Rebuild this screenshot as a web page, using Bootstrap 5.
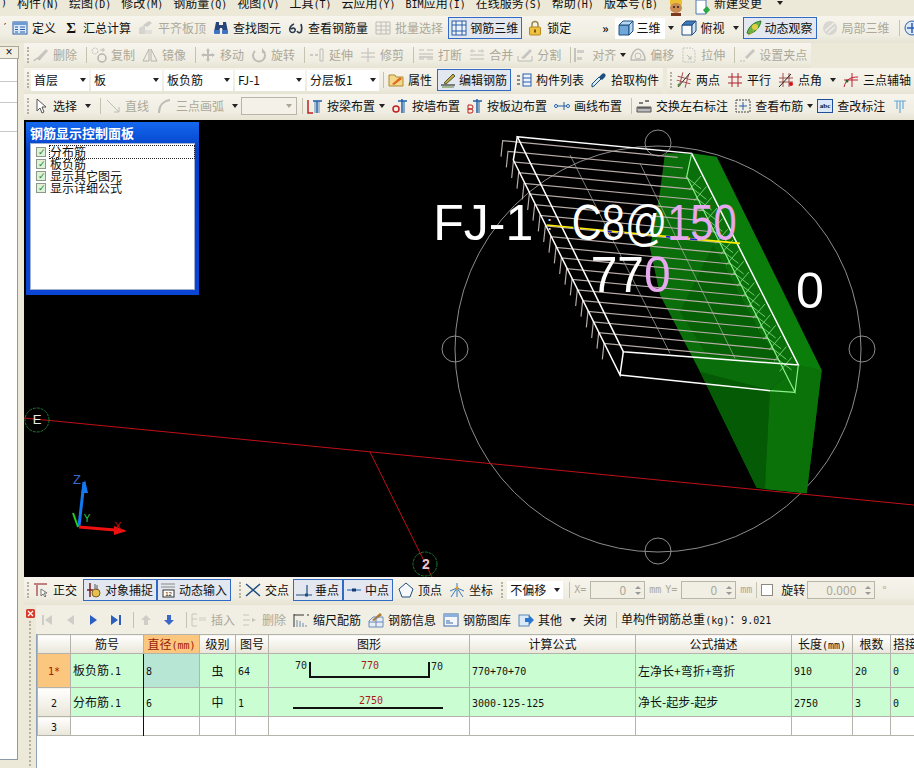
<!DOCTYPE html>
<html lang="zh-CN">
<head>
  <meta charset="UTF-8">
  <meta name="viewport" content="width=device-width, initial-scale=1">
  <title>钢筋三维</title>
  <link href="https://cdn.jsdelivr.net/npm/bootstrap@5.3.3/dist/css/bootstrap.min.css" rel="stylesheet">
  <style>
    html, body { height: 768px; overflow: hidden; }
    body { width: 914px; background: #ece9d8; color: #111; font: 12px/1 "Noto Sans CJK SC", "Liberation Sans", sans-serif; }
    .lat { font-family: "DejaVu Sans Mono", "Liberation Mono", monospace; font-size: 10px; }
    .ic { width: 16px; height: 16px; flex: none; }
    .sigma { font: 700 15px/16px "Liberation Serif", serif; text-align: center; }

    .menu-row { height: 16px; line-height: 5px; gap: 10px; padding-left: 1px; overflow: hidden; white-space: nowrap; }
    .menu-doc { gap: 1px; }
    .menu-caret { margin: 0 0 10px 5px; }
    .tb-row { white-space: nowrap; overflow: hidden; background: #ece9d8; }
    .tb-seg { height: 100%; gap: 7px; background: linear-gradient(#f6f4ec, #f0eee2 70%, #e6e3d3); align-items: center; padding-left: 2px; padding-bottom: 2px; }
    .row-a { height: 27px; }
    .row-a .tb-seg { padding-bottom: 3px; }
    .row-b { height: 25px; }
    .row-c { height: 26px; }
    .tb-it { display: inline-flex; align-items: center; gap: 4px; flex: none; }
    .off { color: #aca899; }
    .off .ic { filter: grayscale(1) opacity(.5); }
    .tb-on { display: inline-flex; align-items: center; gap: 3px; flex: none; height: 22px; margin: 0 -2px; padding: 0 3px 0 2px; border: 1px solid #316ac5; background: #e3e7ef; }
    .grip { width: 2px; height: 16px; flex: none; margin: 0 -3px 0 1px; border-left: 2px dotted #b5b19e; }
    .tb-sep { width: 1px; height: 16px; flex: none; margin: 0 -3px 0 2px; background: #c5c2b0; }
    .arr { width: 0; height: 0; flex: none; border: 3px solid transparent; border-top: 4px solid #222; border-bottom: 0; }
    .tick { margin-right: -3px; }
    .tight { margin-left: -3px; }
    .tighter { margin-left: -5px; }
    .chev-gap { margin-left: 24px; }
    .combo { display: flex; align-items: center; justify-content: space-between; height: 21px; flex: none; padding: 0 3px; background: #fff; }
    .combo-line { gap: 2px; margin: 0 -5px 0 -2px; }
    .combo-w1 { width: 58px; } .combo-w2 { width: 71px; } .combo-w3 { width: 69px; } .combo-w4 { width: 70px; } .combo-w5 { width: 72px; }
    .combo-w6 { width: 56px; height: 18px; margin-right: -3px; }
    .view-box { width: 50px; justify-content: flex-start; gap: 3px; margin-left: -1px; }
    .view-arr { margin-left: -4px; }
    .combo-off { width: 56px; height: 18px; flex: none; display: flex; align-items: center; justify-content: flex-end; padding-right: 4px; margin: 0 -4px 0 -4px; background: #f3f1e8; border: 1px solid #b8b6a8; }
    .combo-off .arr { border-top-color: #aca899; }
    .spin { height: 18px; flex: none; display: flex; align-items: center; justify-content: flex-end; gap: 9px; padding-right: 3px; border: 1px solid #b8b6a8; color: #aca899; background: #f1efe4; }
    .spin-w1 { width: 55px; } .spin-w2 { width: 68px; }
    .spin-btn { display: flex; flex-direction: column; gap: 3px; }
    .spin-btn i { display: block; width: 0; border: 3px solid transparent; border-bottom: 3px solid #999; border-top: 0; }
    .spin-btn i + i { border-top: 3px solid #999; border-bottom: 0; }
    .mm { color: #aca899; }
    .num-set { gap: 4px; align-items: center; }
    .chk-off { width: 12px; height: 12px; flex: none; margin-right: 1px; background: #fff; border: 1px solid #8a8a80; }
    .pair-a { margin-left: -1px; }
    .pair-b { margin: 0 -2px 0 -3px; }
    .pair-a .tb-on, .pair-b .tb-on { margin: 0; }

    .side-col { width: 24px; flex: none; height: 725px; }
    .side-list { width: 18px; height: 701px; background: #fff; border-right: 1px solid #8a9aa8; border-bottom: 1px solid #8a9aa8; }
    .side-head { height: 13px; margin-top: 3px; width: 19px; background: #f1efe4; border: 1px solid #aca899; border-left: 0; text-align: center; font: 12px/11px "Liberation Sans", sans-serif; }
    .side-rw { border-bottom: 1px solid #c8c8c8; }
    .side-h1 { height: 23px; }
    .side-h2 { height: 21px; }
    .side-h3 { height: 29px; }
    .main-col { width: 890px; flex: none; }

    .view-wrap { height: 457px; background: #000; overflow: hidden; }
    .view-wrap svg { display: block; }
    .rebar-panel { position: absolute; left: 2px; top: 2px; width: 173px; height: 173px; background: linear-gradient(#1468ee, #0240c8 16%, #0a45d4); padding: 0 4px 5px; }
    .rebar-title { height: 21px; color: #fff; font-weight: 700; line-height: 21px; font-size: 13px; }
    .rebar-body { height: 147px; background: #fff; border: 1px solid #9fb0d0; padding: 2px 0 0 5px; }
    .rebar-it { height: 12px; display: flex; align-items: center; gap: 4px; color: #111; }
    .rebar-it span { display: block; line-height: 12px; height: 12px; width: 145px; }
    .rebar-it:first-child span { outline: 1px dotted #222; }
    .chk { width: 10px; height: 10px; flex: none; position: relative; background: #dff0d8; border: 1px solid #8a9a88; }
    .chk::after { content: "✓"; position: absolute; left: 1px; top: -1px; font: 700 9px/10px "DejaVu Sans", sans-serif; color: #128a24; }

    .snap-bar { height: 28px; }
    .grid-wrap { height: 163px; background: #ece9d8; overflow: hidden; }
    .grid-rail { width: 12px; flex: none; }
    .grid-close { margin: 4px 0 0 2px; display: block; }
    .grid-dots { width: 0; height: 145px; margin: 3px 0 0 5px; border-left: 2px dotted #b5b19e; }
    .grid-tools { height: 29px; gap: 7px; align-items: center; background: #f1efe4; padding-left: 3px; white-space: nowrap; overflow: hidden; }
    .grid-pane { background: #fff; height: 134px; overflow: hidden; border-left: 1px solid #8ea2b8; }
    .table.grid-tb { width: 893px; table-layout: fixed; border-color: #b4b4ac; }
    .table.grid-tb > * > * > * { padding: 0 2px; vertical-align: middle; font-weight: 400; color: #111; white-space: nowrap; overflow: hidden; }
    .table.grid-tb th { height: 19px; text-align: center; border-top-color: #8ea2b8; background-image: linear-gradient(#fff, #e9e6d8); }
    .table.grid-tb th.th-hot { background-image: none; --bs-table-bg: #fbc67e; color: #9a1a08; }
    .table.grid-tb td.td-green { --bs-table-bg: #cbfdd3; }
    .table.grid-tb td.td-cur { --bs-table-bg: #b8e6d4; }
    .table.grid-tb td.td-head { text-align: center; background-image: linear-gradient(#fff, #e9e6d8); }
    .table.grid-tb td.td-hot { background-image: none; --bs-table-bg: #fbc67e; color: #9a1a08; }
    .table.grid-tb .bar-r { border-right: 1px solid #111; }
    .rw-1 > * { height: 34px; }
    .rw-2 > * { height: 29px; }
    .rw-3 > * { height: 19px; }
    .c-h { width: 33px; } .c-a { width: 73px; } .c-b { width: 56px; } .c-c { width: 36px; }
    .c-d { width: 33px; } .c-e { width: 201px; } .c-f { width: 166px; } .c-g { width: 156px; }
    .c-i { width: 61px; } .c-j { width: 38px; } .c-k { width: 40px; }
    .shape-svg { display: block; margin: 0 -2px; }
    .shape-txt { font: 10px "DejaVu Sans Mono", monospace; }
  </style>
</head>
<body>

<svg width="0" height="0" class="position-absolute">
  <defs>
    <symbol id="i-def" viewBox="0 0 16 16"><rect x="1" y="2" width="14" height="12" fill="#dbe8f8" stroke="#2a5fa8"/><rect x="1" y="2" width="14" height="3" fill="#6f9bd4"/><path d="M3 7h3M3 9.500h3M3 12h3M8 7h5M8 9.500h5M8 12h5" stroke="#2a5fa8"/></symbol>
    <symbol id="i-flat" viewBox="0 0 16 16"><path d="M1 14V8l6-3v9z" fill="#b8b8b0"/><path d="M7 14h7V10H7z" fill="#d0d0c8"/><path d="M5 5l6-4 3 2-5 4z" fill="#a8a8a0"/></symbol>
    <symbol id="i-find" viewBox="0 0 16 16"><path d="M3 2h3v3h4V2h3l2 10h-5l-1-4H7l-1 4H1z" fill="#27457a"/><rect x="1" y="10" width="6" height="4" rx="1" fill="#3d72c4"/><rect x="9" y="10" width="6" height="4" rx="1" fill="#3d72c4"/></symbol>
    <symbol id="i-view" viewBox="0 0 16 16"><path d="M6 4C3 5 1 8 2 11c1 2 4 2 5 0s-1-4-4-2M13 4c1 3 1 6 0 8-1 1-3 1-4-1" fill="none" stroke="#2a3a50" stroke-width="1.600"/></symbol>
    <symbol id="i-batch" viewBox="0 0 16 16"><path d="M1 2h14v12H1zM1 6h14M1 10h14M6 2v12M11 2v12" fill="none" stroke="#888"/></symbol>
    <symbol id="i-bar3d" viewBox="0 0 16 16"><rect x="1" y="1" width="14" height="14" fill="#eef3fb" stroke="#2a5fa8"/><path d="M5 1v14M11 1v14M1 5h14M1 11h14" stroke="#2a5fa8"/></symbol>
    <symbol id="i-lock" viewBox="0 0 16 16"><path d="M5 7V4.500a3 3 0 0 1 6 0V7" fill="none" stroke="#9a8a50" stroke-width="1.500"/><rect x="2.500" y="7" width="11" height="8" rx="1" fill="#f0c040" stroke="#b48a20"/><rect x="7" y="9.500" width="2" height="3" fill="#7a5a10"/></symbol>
    <symbol id="i-cube" viewBox="0 0 16 16"><path d="M1 5h10v10H1z" fill="#6fa8d8" stroke="#1f4e80"/><path d="M1 5l4-4h10l-4 4zM11 5l4-4v10l-4 4z" fill="#b8d8f0" stroke="#1f4e80"/></symbol>
    <symbol id="i-cube2" viewBox="0 0 16 16"><path d="M1 5h10v10H1z" fill="#f6f8fc" stroke="#1f4e80"/><path d="M1 5l4-4h10l-4 4z" fill="#3f78b8" stroke="#1f4e80"/><path d="M11 5l4-4v10l-4 4z" fill="#cfe2f4" stroke="#1f4e80"/></symbol>
    <symbol id="i-orbit" viewBox="0 0 16 16"><path d="M1 13C3 6 8 2 15 1c-1 6-5 11-12 13z" fill="#6ab04a" stroke="#2a7a2a"/><circle cx="9" cy="7" r="3" fill="#e0d040"/><path d="M2 15c3-1 5-3 6-5" stroke="#c8b020" fill="none"/></symbol>
    <symbol id="i-ball" viewBox="0 0 16 16"><circle cx="8" cy="8" r="7" fill="#bbb"/><path d="M3 11l9-8M6 13l7-6" stroke="#eee" stroke-width="1.500"/></symbol>
    <symbol id="i-nav" viewBox="0 0 16 16"><circle cx="8" cy="8" r="7" fill="#dbe8f8" stroke="#2a5fa8"/><path d="M8 3v10M3 8h10" stroke="#2a5fa8" stroke-width="1.500"/></symbol>

    <symbol id="i-del" viewBox="0 0 16 16"><path d="M4 11L13 2l2 2-8 9z" fill="#999"/><path d="M1 14c2-3 4-3 6-1" stroke="#888" fill="none" stroke-width="1.500"/></symbol>
    <symbol id="i-copy" viewBox="0 0 16 16"><circle cx="4" cy="4" r="3" fill="none" stroke="#888" stroke-dasharray="2 1"/><circle cx="11" cy="11" r="4" fill="none" stroke="#777" stroke-width="1.500"/><path d="M9 3h5M12 1v4" stroke="#888"/></symbol>
    <symbol id="i-mirror" viewBox="0 0 16 16"><path d="M7 2v12H1zM9 2v12h6z" fill="none" stroke="#777"/></symbol>
    <symbol id="i-move" viewBox="0 0 16 16"><path d="M8 1l2 3H9v3h3V6l3 2-3 2V9H9v3h1l-2 3-2-3h1V9H4v1L1 8l3-2v1h3V4H6z" fill="#888"/></symbol>
    <symbol id="i-rot" viewBox="0 0 16 16"><path d="M4 4a6 6 0 1 0 8 0" fill="none" stroke="#888" stroke-width="2"/><path d="M11 1v5h4" fill="#888"/></symbol>
    <symbol id="i-ext" viewBox="0 0 16 16"><path d="M1 8h3M6 8h3" stroke="#888" stroke-width="1.500"/><path d="M11 2v12M14 2v12M11 2h3M11 14h3" stroke="#888" fill="none"/></symbol>
    <symbol id="i-trim" viewBox="0 0 16 16"><path d="M1 6h14M1 10h14M8 1v14" stroke="#888" fill="none"/></symbol>
    <symbol id="i-brk" viewBox="0 0 16 16"><path d="M1 3h5M9 3h6M1 7h14M1 12h5M9 12h6" stroke="#888"/><rect x="1" y="9" width="14" height="2" fill="#aaa"/></symbol>
    <symbol id="i-merge" viewBox="0 0 16 16"><path d="M1 4h5M9 4h6M1 8h14M1 12h14" stroke="#888"/><path d="M3 2v4M13 2v4" stroke="#aaa"/></symbol>
    <symbol id="i-split" viewBox="0 0 16 16"><path d="M1 14h14M1 14V9M15 14V9" stroke="#888" fill="none"/><path d="M4 11L13 2l2 2-8 8z" fill="#999"/></symbol>
    <symbol id="i-align" viewBox="0 0 12 16"><path d="M1 1v14" stroke="#777" stroke-width="1.500"/><rect x="3" y="3" width="7" height="3" fill="#aaa"/><rect x="3" y="10" width="5" height="3" fill="#aaa"/></symbol>
    <symbol id="i-off" viewBox="0 0 16 16"><path d="M1 13c0-6 4-11 7-11s7 5 7 11z" fill="none" stroke="#888" stroke-width="1.500"/><circle cx="8" cy="9" r="3" fill="none" stroke="#888"/></symbol>
    <symbol id="i-str" viewBox="0 0 16 16"><path d="M2 1h9l3 3v11H2z" fill="none" stroke="#999" stroke-dasharray="2 1"/><path d="M6 8l4 4M10 9v3H7" stroke="#888" fill="none"/></symbol>
    <symbol id="i-clip" viewBox="0 0 16 16"><path d="M6 10l8-8 2 2-8 8z" fill="#999"/><path d="M1 14h6" stroke="#888" stroke-dasharray="2 1"/></symbol>

    <symbol id="i-attr" viewBox="0 0 16 16"><path d="M1 3h6l1 2h7v9H1z" fill="#f4d88a" stroke="#b08a30"/><path d="M4 12l8-7 2 2-8 6z" fill="#e06a20"/></symbol>
    <symbol id="i-edit" viewBox="0 0 16 16"><path d="M1 13h14" stroke="#111"/><path d="M4 11L13 2l2 2-9 8z" fill="#c8a840" stroke="#4a5a30"/><path d="M2 15h12" stroke="#5a8a3a"/></symbol>
    <symbol id="i-list" viewBox="0 0 16 16"><path d="M1 3h3v2H1zM1 7h3v2H1zM1 11h3v2H1z" fill="#888"/><rect x="7" y="2" width="8" height="12" fill="#eef3fb" stroke="#2a5fa8"/><path d="M7 6h8M7 10h8" stroke="#2a5fa8"/></symbol>
    <symbol id="i-pick" viewBox="0 0 16 16"><path d="M1 15l2-1 7-7-2-2-7 7z" fill="#d8ecf8" stroke="#1f4e80"/><path d="M8 5l3-3a2 2 0 0 1 3 3l-3 3z" fill="#1f4e80"/></symbol>
    <symbol id="i-two" viewBox="0 0 16 16"><path d="M5 1v14M11 1v14M1 6h14M1 10h14" stroke="#a05050" fill="none" transform="rotate(15 8 8)"/><path d="M2 15L14 1" stroke="#333"/><circle cx="3" cy="13" r="1.500" fill="#5a8a3a"/></symbol>
    <symbol id="i-par" viewBox="0 0 16 16"><path d="M5 1v14M11 1v14M1 5h14M1 11h14" stroke="#b02030" fill="none"/></symbol>
    <symbol id="i-ang" viewBox="0 0 16 16"><path d="M5 1v14M11 1v14M1 6h14M1 10h14" stroke="#a05050"/><path d="M1 15L13 2" stroke="#222"/><circle cx="13" cy="12" r="2" fill="#d81020"/></symbol>
    <symbol id="i-tri" viewBox="0 0 16 16"><path d="M1 15C3 7 8 5 15 5M1 8h14M9 1v14" stroke="#c02030" fill="none"/><circle cx="4" cy="9" r="1.500" fill="#2a5a2a"/></symbol>

    <symbol id="i-cur" viewBox="0 0 16 16"><path d="M4 1v12l3-3 2 5 2-1-2-5h4z" fill="#fff" stroke="#555"/></symbol>
    <symbol id="i-line" viewBox="0 0 16 16"><path d="M2 2l12 12M14 9v5H9" stroke="#888" fill="none"/></symbol>
    <symbol id="i-arc" viewBox="0 0 16 16"><path d="M3 15C3 8 7 3 14 2" stroke="#888" fill="none" stroke-width="2"/></symbol>
    <symbol id="i-beam" viewBox="0 0 16 16"><path d="M1 2v13h5" stroke="#c02020" fill="none" stroke-width="1.500"/><path d="M6 3h9M10 3v12" stroke="#1f5fa8" fill="none" stroke-width="1.500"/><path d="M8 3v12M12 3v12" stroke="#1f5fa8" fill="none" stroke-width=".7"/></symbol>
    <symbol id="i-wall" viewBox="0 0 16 16"><circle cx="4" cy="11" r="3" fill="none" stroke="#c02020" stroke-width="1.500"/><path d="M6 3h9M10 1v14" stroke="#1f5fa8" fill="none" stroke-width="1.500"/><path d="M12 3v12" stroke="#1f5fa8"/></symbol>
    <symbol id="i-slab" viewBox="0 0 16 16"><path d="M1 7h3a2 2 0 0 1 0 4H1zM1 11h3a2 2 0 0 1 0 4H1z" fill="none" stroke="#c02020"/><path d="M6 3h9M10 1v14" stroke="#1f5fa8" fill="none" stroke-width="1.500"/><path d="M12 3v12" stroke="#1f5fa8"/></symbol>
    <symbol id="i-draw" viewBox="0 0 16 16"><path d="M1 8h14M10 4v8" stroke="#1f5fa8"/><circle cx="2" cy="8" r="1.500" fill="#fff" stroke="#1f5fa8"/><circle cx="14" cy="8" r="1.500" fill="#fff" stroke="#1f5fa8"/></symbol>
    <symbol id="i-swap" viewBox="0 0 16 16"><path d="M1 9h14v5H1z" fill="#bbb" stroke="#555"/><path d="M3 9v2M5 9v2M7 9v2M9 9v2M11 9v2M13 9v2" stroke="#333"/><path d="M3 5h4M9 3h4" stroke="#555" stroke-width="1.500"/></symbol>
    <symbol id="i-look" viewBox="0 0 16 16"><rect x="1" y="2" width="14" height="12" fill="none" stroke="#444" stroke-dasharray="2 1"/><path d="M8 4v8M4 8h8" stroke="#2a5fa8"/></symbol>
    <symbol id="i-t" viewBox="0 0 16 16"><path d="M2 3h12M8 3v12M5 3v8M11 3v8" stroke="#6aa8d8" fill="none" stroke-width="1.200"/></symbol>

    <symbol id="i-orth" viewBox="0 0 16 16"><path d="M1 2h13M4 2v12" stroke="#c08080" stroke-width="2" fill="none"/><path d="M8 7v7l2-2 2 3 1-1-2-3h3z" fill="#fff" stroke="#777"/></symbol>
    <symbol id="i-snap" viewBox="0 0 16 16"><path d="M4 1v14M1 8h6" stroke="#7a2020" stroke-width="1.500"/><circle cx="10" cy="11" r="4" fill="#e8c050" stroke="#7a6020"/><path d="M9 2v5M11 3v5" stroke="#555"/></symbol>
    <symbol id="i-dyn" viewBox="0 0 16 16"><path d="M1 2h14M1 5h14" stroke="#888"/><rect x="3" y="8" width="11" height="7" fill="#fff" stroke="#333"/><text x="8.500" y="14" text-anchor="middle" font-size="6" font-family="Liberation Sans" fill="#111">12</text></symbol>
    <symbol id="i-cross" viewBox="0 0 16 16"><path d="M1 2l14 12M15 2L1 14" stroke="#1f4e80" stroke-width="1.500"/></symbol>
    <symbol id="i-perp" viewBox="0 0 16 16"><path d="M0 13h16M11 3v10" stroke="#1f4e80" stroke-width="1.200"/><rect x="9" y="11.500" width="3" height="3" fill="#1f4e80"/></symbol>
    <symbol id="i-mid" viewBox="0 0 16 16"><path d="M1 8h14" stroke="#5a8ac8" stroke-width="1.500"/><rect x="6" y="6.500" width="4" height="3" fill="#123a70"/></symbol>
    <symbol id="i-vert" viewBox="0 0 16 16"><path d="M8 1l7 6-3 8H4L1 7z" fill="#f6f8fc" stroke="#1f4e80"/></symbol>
    <symbol id="i-coord" viewBox="0 0 16 16"><path d="M8 1v14M1 9l7-3 7 3M2 15l6-9 6 9" stroke="#3a78b8" fill="none"/><circle cx="8" cy="6" r="1.500" fill="#e0a020"/></symbol>

    <symbol id="i-first" viewBox="0 0 16 16"><path d="M3 3h2v10H3zM13 3v10L6 8z" fill="#aaa"/></symbol>
    <symbol id="i-prev" viewBox="0 0 16 16"><path d="M12 3v10L5 8z" fill="#aaa"/></symbol>
    <symbol id="i-next" viewBox="0 0 16 16"><path d="M5 3v10l7-5z" fill="#2a5fc0"/></symbol>
    <symbol id="i-last" viewBox="0 0 16 16"><path d="M3 3v10l7-5zM11 3h2v10h-2z" fill="#2a5fc0"/></symbol>
    <symbol id="i-up" viewBox="0 0 16 16"><path d="M8 3l5 5h-3v5H6V8H3z" fill="#aaa"/></symbol>
    <symbol id="i-down" viewBox="0 0 16 16"><path d="M8 13l5-5h-3V3H6v5H3z" fill="#3a68c8"/></symbol>
    <symbol id="i-ins" viewBox="0 0 16 16"><path d="M1 2h5M1 2v12M1 7h5M1 14h5" stroke="#999" fill="none"/><path d="M8 8h7M8 6h7" stroke="#aaa"/></symbol>
    <symbol id="i-rem" viewBox="0 0 16 16"><path d="M1 3h6M1 8h7M1 13h6" stroke="#999"/><path d="M10 6l4 2-4 2z" fill="#999"/></symbol>
    <symbol id="i-scale" viewBox="0 0 16 16"><path d="M1 2v13M1 3h10M14 3h2" stroke="#333"/><path d="M4 15V8M7 15V9M10 15v-4M13 15v-2" stroke="#6a8aa8"/></symbol>
    <symbol id="i-info" viewBox="0 0 16 16"><path d="M1 9l4-4h10v10H1z" fill="#e8ecf4" stroke="#6a8ab8"/><path d="M4 8l8-7 2 2-8 6z" fill="#b07a30"/><path d="M8 5v10M1 10h14" stroke="#6a8ab8"/></symbol>
    <symbol id="i-lib" viewBox="0 0 16 16"><rect x="1" y="2" width="14" height="12" fill="#f4f6fa" stroke="#3a68a8"/><rect x="1" y="2" width="14" height="3" fill="#8ab0dc"/><path d="M3 9h4M3 11h7" stroke="#3a68a8"/></symbol>
    <symbol id="i-oth" viewBox="0 0 16 16"><rect x="1" y="3" width="10" height="11" fill="#dbe8f8" stroke="#5a88b8"/><path d="M7 6h4V3l5 5-5 5v-3H7z" fill="#2a78d0"/></symbol>
  </defs>
</svg>

<div class="menu-row d-flex">
  <span class="lat">)</span>
  <span>构件<span class="lat">(N)</span></span><span>绘图<span class="lat">(D)</span></span><span>修改<span class="lat">(M)</span></span><span>钢筋量<span class="lat">(Q)</span></span><span>视图<span class="lat">(V)</span></span><span>工具<span class="lat">(T)</span></span><span>云应用<span class="lat">(Y)</span></span><span><span class="lat">BIM</span>应用<span class="lat">(I)</span></span><span>在线服务<span class="lat">(S)</span></span><span>帮助<span class="lat">(H)</span></span><span>版本号<span class="lat">(B)</span></span>
  <svg class="ic" viewBox="0 0 16 16"><path d="M2 0h12v5H2z" fill="#eac030"/><ellipse cx="8" cy="8" rx="6" ry="5" fill="#c88a50"/><circle cx="6" cy="7" r="1" fill="#222"/><circle cx="10" cy="7" r="1" fill="#222"/><path d="M3 13h10v3H3z" fill="#7a3a20"/></svg>
  <span class="tb-it align-items-start menu-doc"><svg class="ic" viewBox="0 0 16 16"><path d="M2 0h10v14H2z" fill="#fff" stroke="#4a78b0"/><path d="M9 10l4-4 3 4-4 4z" fill="#2aa84a"/></svg>新建变更</span>
  <span class="arr align-self-center menu-caret"></span>
</div>

<div class="tb-row row-a d-flex align-items-center">
  <div class="tb-seg d-flex w-100">
    <span class="lat tick">′</span>
    <span class="tb-it"><svg class="ic"><use href="#i-def"/></svg>定义</span>
    <span class="tb-it"><span class="ic sigma">Σ</span>汇总计算</span>
    <span class="tb-it off"><svg class="ic"><use href="#i-flat"/></svg>平齐板顶</span>
    <span class="tb-it"><svg class="ic"><use href="#i-find"/></svg>查找图元</span>
    <span class="tb-it"><svg class="ic"><use href="#i-view"/></svg>查看钢筋量</span>
    <span class="tb-it off"><svg class="ic"><use href="#i-batch"/></svg>批量选择</span>
    <span class="tb-on"><svg class="ic"><use href="#i-bar3d"/></svg>钢筋三维</span>
    <span class="tb-it"><svg class="ic"><use href="#i-lock"/></svg>锁定</span>
    <span class="fw-bold chev-gap">»</span>
    <span class="combo view-box"><svg class="ic"><use href="#i-cube"/></svg>三维</span>
    <span class="arr view-arr"></span>
    <span class="tb-it"><svg class="ic"><use href="#i-cube2"/></svg>俯视<span class="arr ms-1"></span></span>
    <span class="tb-on tight"><svg class="ic"><use href="#i-orbit"/></svg>动态观察</span>
    <span class="tb-it off"><svg class="ic"><use href="#i-ball"/></svg>局部三维</span>
    <span class="tb-sep"></span>
    <svg class="ic"><use href="#i-nav"/></svg>
  </div>
</div>

<div class="d-flex">
  <aside class="side-col">
    <div class="side-head">×</div>
    <div class="side-list">
      <div class="side-rw side-h1"></div>
      <div class="side-rw side-h2"></div>
      <div class="side-rw side-h3"></div>
    </div>
  </aside>

  <div class="main-col">
    <div class="tb-row row-b">
      <div class="tb-seg d-inline-flex">
        <span class="grip"></span>
        <span class="tb-it off"><svg class="ic"><use href="#i-del"/></svg>删除</span><span class="tb-sep"></span>
        <span class="tb-it off"><svg class="ic"><use href="#i-copy"/></svg>复制</span>
        <span class="tb-it off"><svg class="ic"><use href="#i-mirror"/></svg>镜像</span><span class="tb-sep"></span>
        <span class="tb-it off"><svg class="ic"><use href="#i-move"/></svg>移动</span>
        <span class="tb-it off"><svg class="ic"><use href="#i-rot"/></svg>旋转</span><span class="tb-sep"></span>
        <span class="tb-it off"><svg class="ic"><use href="#i-ext"/></svg>延伸</span>
        <span class="tb-it off"><svg class="ic"><use href="#i-trim"/></svg>修剪</span><span class="tb-sep"></span>
        <span class="tb-it off"><svg class="ic"><use href="#i-brk"/></svg>打断</span>
        <span class="tb-it off"><svg class="ic"><use href="#i-merge"/></svg>合并</span>
        <span class="tb-it off tight"><svg class="ic"><use href="#i-split"/></svg>分割</span><span class="tb-sep"></span>
        <span class="tb-it off tight"><svg class="ic"><use href="#i-align"/></svg>对齐<span class="arr"></span></span>
        <span class="tb-it off tight"><svg class="ic"><use href="#i-off"/></svg>偏移</span>
        <span class="tb-it off"><svg class="ic"><use href="#i-str"/></svg>拉伸</span><span class="tb-sep"></span>
        <span class="tb-it off pe-1"><svg class="ic"><use href="#i-clip"/></svg>设置夹点</span>
      </div>
    </div>

    <div class="tb-row row-c d-flex">
      <div class="tb-seg d-flex">
        <span class="grip"></span>
        <div class="d-flex combo-line">
          <span class="combo combo-w1">首层<span class="arr"></span></span>
          <span class="combo combo-w2">板<span class="arr"></span></span>
          <span class="combo combo-w3">板负筋<span class="arr"></span></span>
          <span class="combo combo-w4">FJ-1<span class="arr"></span></span>
          <span class="combo combo-w5">分层板1<span class="arr"></span></span>
        </div>
        <span class="tb-sep"></span>
        <span class="tb-it"><svg class="ic"><use href="#i-attr"/></svg>属性</span>
        <span class="tb-on"><svg class="ic"><use href="#i-edit"/></svg>编辑钢筋</span>
        <span class="tb-it"><svg class="ic"><use href="#i-list"/></svg>构件列表</span>
        <span class="tb-it pe-1"><svg class="ic"><use href="#i-pick"/></svg>拾取构件</span>
      </div>
      <div class="tb-seg d-flex flex-grow-1 ms-1">
        <span class="grip"></span>
        <span class="tb-it"><svg class="ic"><use href="#i-two"/></svg>两点</span>
        <span class="tb-it"><svg class="ic"><use href="#i-par"/></svg>平行</span>
        <span class="tb-it"><svg class="ic"><use href="#i-ang"/></svg>点角<span class="arr ms-1"></span></span>
        <span class="tb-it"><svg class="ic"><use href="#i-tri"/></svg>三点辅轴</span>
      </div>
    </div>

    <div class="tb-row row-c">
      <div class="tb-seg d-flex">
        <span class="grip"></span>
        <span class="tb-it"><svg class="ic"><use href="#i-cur"/></svg>选择<span class="arr ms-1"></span></span>
        <span class="tb-sep"></span>
        <span class="tb-it off"><svg class="ic"><use href="#i-line"/></svg>直线</span>
        <span class="tb-it off"><svg class="ic"><use href="#i-arc"/></svg>三点画弧<span class="arr ms-1"></span></span>
        <span class="combo-off"><span class="arr"></span></span>
        <span class="tb-sep"></span>
        <span class="tb-it"><svg class="ic"><use href="#i-beam"/></svg>按梁布置<span class="arr"></span></span>
        <span class="tb-it"><svg class="ic"><use href="#i-wall"/></svg>按墙布置</span>
        <span class="tb-it"><svg class="ic"><use href="#i-slab"/></svg>按板边布置</span>
        <span class="tb-it"><svg class="ic"><use href="#i-draw"/></svg>画线布置</span>
        <span class="tb-sep"></span>
        <span class="tb-it"><svg class="ic"><use href="#i-swap"/></svg>交换左右标注</span>
        <span class="tb-it"><svg class="ic"><use href="#i-look"/></svg>查看布筋<span class="arr"></span></span>
        <span class="tb-it tight"><svg class="ic" viewBox="0 0 16 16"><rect x=".5" y="1.500" width="15" height="13" fill="#dbe8f8" stroke="#1f4e9a"/><text x="8" y="10" text-anchor="middle" font-size="7" font-family="Liberation Serif" font-weight="700" fill="#111">abc</text></svg>查改标注</span>
        <svg class="ic"><use href="#i-t"/></svg>
      </div>
    </div>

    <div class="view-wrap position-relative">
      <svg width="890" height="457" viewBox="24 120 890 457">
        <g fill="none" stroke="#8c8c8c">
          <circle cx="658" cy="349" r="203"/>
          <circle cx="658" cy="143" r="13"/>
          <circle cx="658" cy="551" r="13"/>
          <circle cx="455" cy="349" r="13"/>
          <circle cx="862" cy="349" r="13"/>
        </g>
        <g transform="translate(430 125) scale(.33333)">
          <path d="M785 85L860 95L1175 735L1130 1105L1005 1092L1020 795L1105 720Z" fill="#0a7d0a"/>
          <path d="M705 85L785 85L1105 720L1020 795L1005 1092L980 1088L810 740L690 510L660 370L690 200Z" fill="#0a6e0a"/>
          <path d="M810 740L1020 795L1005 1092L980 1088Z" fill="#055a05"/>
          <path d="M1105 720L1175 735L1130 1105L1005 1092L1020 795Z" fill="#0a7208"/>
          <path d="M850 360L1000 640L1060 710L830 690L750 560Z" fill="#066006"/>

          <g id="rebarLines" fill="none"></g>

          <g fill="none" stroke="#fff" stroke-width="4.500">
            <path d="M262 35L785 85L1105 720L580 680Z"/>
            <path d="M262 35L250 105L570 750L580 680"/>
            <path d="M570 750L1020 797"/>
          </g>
          <g fill="none" stroke="#8cf08c" stroke-width="3.500">
            <path d="M785 85L770 155L1095 802L1105 720"/>
            <path d="M1020 797L1095 802"/>
          </g>

          <path d="M350 300L930 355" stroke="#ffee00" stroke-width="5"/>
          <path d="M430 308l20 2M525 318l20 2M565 322l18 2M708 335l14 1M780 342l22 2" stroke="#1818d0" stroke-width="5"/>

          <g font-family="Liberation Sans" font-size="150">
            <text x="10" y="345" textLength="300" lengthAdjust="spacingAndGlyphs" fill="#fff">FJ-1</text>
            <text x="350" y="315" font-size="60" fill="#c8c8c8">:</text>
            <text x="425" y="345" textLength="495" lengthAdjust="spacingAndGlyphs" fill="#fff">C8@<tspan fill="#e6a8ee">150</tspan></text>
            <text x="482" y="500" textLength="240" lengthAdjust="spacingAndGlyphs" fill="#fff">77<tspan fill="#e6a8ee">0</tspan></text>
            <text x="1098" y="550" fill="#fff" textLength="84" lengthAdjust="spacingAndGlyphs">0</text>
          </g>
        </g>
        <g fill="none" stroke="#c01018">
          <path d="M24 418L914 505"/>
          <path d="M370 452L432 577"/>
        </g>
        <g fill="none" stroke="#1c7a30" stroke-dasharray="3 1">
          <circle cx="37" cy="420" r="12"/>
          <circle cx="425" cy="564" r="12"/>
        </g>
        <text x="37" y="424" text-anchor="middle" font-size="13" font-family="Liberation Sans" fill="#e8e8e8">E</text>
        <text x="426" y="569" text-anchor="middle" font-size="14" font-family="Liberation Sans" font-weight="700" fill="#e8c8d0">2</text>

        <path d="M79 526L84 482" stroke="#1478f0" stroke-width="3"/>
        <path d="M85 480l3 13h-7z" fill="#1478f0"/>
        <path d="M79 527L115 530" stroke="#f01010" stroke-width="3"/>
        <path d="M127 531l-13 4v-9z" fill="#f01010"/>
        <path d="M78 527L73 513" stroke="#20d020" stroke-width="2"/>
        <text x="77" y="484" text-anchor="middle" font-size="13" font-family="Liberation Sans" fill="#3a6ac8">Z</text>
        <text x="87" y="522" text-anchor="middle" font-size="10" font-family="Liberation Sans" fill="#30d040">Y</text>
        <text x="118" y="530" text-anchor="middle" font-size="11" font-family="Liberation Sans" fill="#c01010">X</text>
      </svg>

      <div class="rebar-panel">
        <div class="rebar-title">钢筋显示控制面板</div>
        <div class="rebar-body">
          <div class="rebar-it"><i class="chk"></i><span>分布筋</span></div>
          <div class="rebar-it"><i class="chk"></i><span>板负筋</span></div>
          <div class="rebar-it"><i class="chk"></i><span>显示其它图元</span></div>
          <div class="rebar-it"><i class="chk"></i><span>显示详细公式</span></div>
        </div>
      </div>
    </div>

    <div class="tb-row snap-bar">
      <div class="tb-seg d-flex">
        <span class="grip"></span>
        <span class="tb-it"><svg class="ic"><use href="#i-orth"/></svg>正交</span>
        <span class="d-flex pair-a">
          <span class="tb-on"><svg class="ic"><use href="#i-snap"/></svg>对象捕捉</span>
          <span class="tb-on"><svg class="ic"><use href="#i-dyn"/></svg>动态输入</span>
        </span>
        <span class="grip"></span>
        <span class="tb-it"><svg class="ic"><use href="#i-cross"/></svg>交点</span>
        <span class="d-flex pair-b">
          <span class="tb-on"><svg class="ic"><use href="#i-perp"/></svg>垂点</span>
          <span class="tb-on"><svg class="ic"><use href="#i-mid"/></svg>中点</span>
        </span>
        <span class="tb-it"><svg class="ic"><use href="#i-vert"/></svg>顶点</span>
        <span class="tb-it"><svg class="ic"><use href="#i-coord"/></svg>坐标</span>
        <span class="grip"></span>
        <span class="combo combo-w6">不偏移<span class="arr"></span></span>
        <span class="tb-sep"></span>
        <span class="d-flex num-set">
          <span class="lat mm">X=</span>
          <span class="spin spin-w1">0<span class="spin-btn"><i></i><i></i></span></span>
          <span class="lat mm">mm</span>
        </span>
        <span class="d-flex num-set tight">
          <span class="lat mm">Y=</span>
          <span class="spin spin-w1">0<span class="spin-btn"><i></i><i></i></span></span>
          <span class="lat mm">mm</span>
        </span>
        <span class="tb-sep tight"></span>
        <span class="chk-off"></span>
        <span>旋转</span>
        <span class="spin spin-w2 tighter">0.000<span class="spin-btn"><i></i><i></i></span></span>
        <span class="mm">°</span>
      </div>
    </div>

    <div class="grid-wrap d-flex">
      <div class="grid-rail">
        <svg class="grid-close" width="9" height="9" viewBox="0 0 9 9"><rect width="9" height="9" rx="1.500" fill="#d83a2a"/><path d="M2 2l5 5M7 2L2 7" stroke="#fff" stroke-width="1.300"/></svg>
        <div class="grid-dots"></div>
      </div>
      <div class="flex-grow-1 overflow-hidden">
        <div class="grid-tools d-flex">
          <span class="tb-it off"><svg class="ic"><use href="#i-first"/></svg></span>
          <span class="tb-it off"><svg class="ic"><use href="#i-prev"/></svg></span>
          <span class="tb-it"><svg class="ic"><use href="#i-next"/></svg></span>
          <span class="tb-it"><svg class="ic"><use href="#i-last"/></svg></span>
          <span class="tb-sep"></span>
          <span class="tb-it off"><svg class="ic"><use href="#i-up"/></svg></span>
          <span class="tb-it"><svg class="ic"><use href="#i-down"/></svg></span>
          <span class="tb-sep"></span>
          <span class="tb-it off"><svg class="ic"><use href="#i-ins"/></svg>插入</span>
          <span class="tb-it off"><svg class="ic"><use href="#i-rem"/></svg>删除</span>
          <span class="tb-it"><svg class="ic"><use href="#i-scale"/></svg>缩尺配筋</span>
          <span class="tb-it"><svg class="ic"><use href="#i-info"/></svg>钢筋信息</span>
          <span class="tb-it"><svg class="ic"><use href="#i-lib"/></svg>钢筋图库</span>
          <span class="tb-it"><svg class="ic"><use href="#i-oth"/></svg>其他<span class="arr ms-1"></span></span>
          <span>关闭</span>
          <span class="tb-sep"></span>
          <span>单构件钢筋总重<span class="lat">(kg)</span>：<span class="lat">9.021</span></span>
        </div>
        <div class="grid-pane">
          <table class="table table-bordered mb-0 grid-tb">
            <thead>
              <tr>
                <th class="c-h"></th><th class="c-a">筋号</th><th class="c-b th-hot">直径<span class="lat">(mm)</span></th><th class="c-c">级别</th><th class="c-d">图号</th><th class="c-e">图形</th><th class="c-f">计算公式</th><th class="c-g">公式描述</th><th class="c-i">长度<span class="lat">(mm)</span></th><th class="c-j">根数</th><th class="c-k text-start">搭接</th>
              </tr>
            </thead>
            <tbody>
              <tr class="rw-1">
                <td class="td-head td-hot"><span class="lat">1*</span></td>
                <td class="td-green bar-r">板负筋<span class="lat">.1</span></td>
                <td class="td-cur"><span class="lat">8</span></td>
                <td class="td-green text-center">虫</td>
                <td class="td-green"><span class="lat">64</span></td>
                <td class="td-green">
                  <svg class="shape-svg" width="201" height="33" viewBox="0 0 201 33">
                    <path d="M41 8v15h119V8" fill="none" stroke="#111" stroke-width="2"/>
                    <text x="26" y="15" class="shape-txt" fill="#222">70</text>
                    <text x="162" y="16" class="shape-txt" fill="#222">70</text>
                    <text x="101" y="15" text-anchor="middle" class="shape-txt" fill="#b01818">770</text>
                  </svg>
                </td>
                <td class="td-green"><span class="lat">770+70+70</span></td>
                <td class="td-green">左净长+弯折+弯折</td>
                <td class="td-green"><span class="lat">910</span></td>
                <td class="td-green"><span class="lat">20</span></td>
                <td class="td-green"><span class="lat">0</span></td>
              </tr>
              <tr class="rw-2">
                <td class="td-head"><span class="lat">2</span></td>
                <td class="td-green bar-r">分布筋<span class="lat">.1</span></td>
                <td class="td-green"><span class="lat">6</span></td>
                <td class="td-green text-center">中</td>
                <td class="td-green"><span class="lat">1</span></td>
                <td class="td-green">
                  <svg class="shape-svg" width="201" height="28" viewBox="0 0 201 28">
                    <path d="M24 20h150" stroke="#111" stroke-width="2"/>
                    <text x="102" y="16" text-anchor="middle" class="shape-txt" fill="#b01818">2750</text>
                  </svg>
                </td>
                <td class="td-green"><span class="lat">3000-125-125</span></td>
                <td class="td-green">净长-起步-起步</td>
                <td class="td-green"><span class="lat">2750</span></td>
                <td class="td-green"><span class="lat">3</span></td>
                <td class="td-green"><span class="lat">0</span></td>
              </tr>
              <tr class="rw-3">
                <td class="td-head"><span class="lat">3</span></td>
                <td class="bar-r"></td><td></td><td></td><td></td><td></td><td></td><td></td><td></td><td></td><td></td>
              </tr>
            </tbody>
          </table>
        </div>
      </div>
    </div>
  </div>
</div>

<script>
  // rebar lines: 20 bars on the slab, plus the lattice hooks at the far end
  var g = document.getElementById("rebarLines");
  var out = "";
  for (var i = 0; i < 20; i++) {
    var x = 218 + 16 * i, y = 47 + 32 * i;
    var ex = x + 525, ey = y + 50;
    out += '<path d="M' + (x - 5) + ' ' + (y + 48) + 'L' + x + ' ' + y + 'L' + ex + ' ' + ey + '" stroke="#b8aca8" stroke-width="3.500"/>';
    if (i > 1) {
      out += '<path d="M' + (ex - 8) + ' ' + (ey - 6) + 'L' + (ex + 38) + ' ' + (ey + 30) + 'M' + (ex + 38) + ' ' + (ey - 8) + 'L' + (ex + 2) + ' ' + (ey + 34) + '" stroke="#7fe07f" stroke-width="2.500"/>';
    }
  }
  out += '<path d="M420 90L720 685M630 115L915 700" stroke="#b5b5b0" stroke-width="2"/>';
  g.innerHTML = out;
</script>

<script src="https://cdn.jsdelivr.net/npm/bootstrap@5.3.3/dist/js/bootstrap.bundle.min.js"></script>
</body>
</html>
